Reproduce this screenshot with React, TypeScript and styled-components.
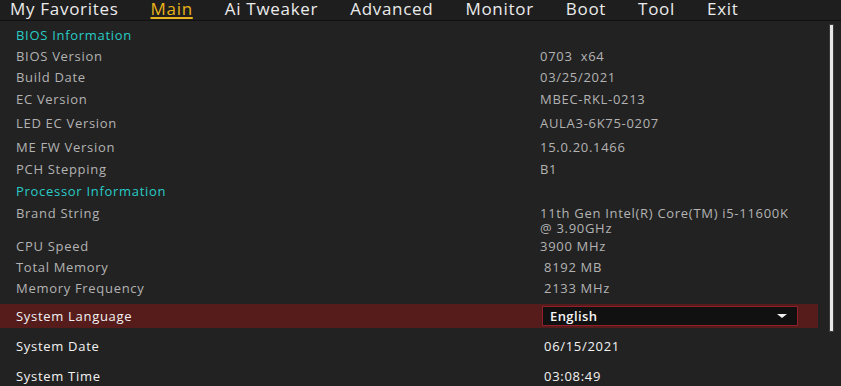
import React from 'react';
import styled, { createGlobalStyle } from 'styled-components';

const GlobalStyle = createGlobalStyle`
  html, body {
    margin: 0;
    padding: 0;
    background: #222222;
  }
  body {
    font-family: "Open Sans", "Noto Sans", "Liberation Sans", sans-serif;
    overflow: hidden;
  }
`;

const Screen = styled.div`
  width: 841px;
  height: 386px;
  background: #222222;
  overflow: hidden;
`;

const TabBar = styled.nav`
  display: flex;
  gap: 32px;
  height: 20px;
  padding-left: 10px;
  background: #1e1e1e;
  border-bottom: 1px solid #111111;
  align-items: flex-start;
`;

const Tab = styled.span<{ $active?: boolean }>`
  font-size: 17px;
  line-height: 20px;
  margin-top: -1px;
  letter-spacing: 0.7px;
  color: ${(p) => (p.$active ? '#e8b21c' : '#ebebeb')};
  text-decoration: ${(p) => (p.$active ? 'underline' : 'none')};
  text-decoration-thickness: 2px;
  text-underline-offset: 2px;
`;

const Body = styled.div`
  display: flex;
  padding-top: 3px;
`;

const List = styled.div`
  width: 818px;
  display: flex;
  flex-direction: column;
`;

const Row = styled.div<{ $h: number; $top?: boolean; $selected?: boolean; $gap?: number }>`
  display: flex;
  height: ${(p) => p.$h}px;
  margin-top: ${(p) => p.$gap ?? 0}px;
  align-items: ${(p) => (p.$top ? 'flex-start' : 'center')};
  padding-top: ${(p) => (p.$top ? 4 : 0)}px;
  box-sizing: border-box;
  background: ${(p) => (p.$selected ? '#561c1c' : 'transparent')};
  font-size: 13px;
  line-height: 15px;
  letter-spacing: 0.7px;
`;

const Section = styled.div`
  padding-left: 16px;
  color: #27ccc7;
`;

const Label = styled.div<{ $bright?: boolean }>`
  width: 524px;
  padding-left: 16px;
  color: ${(p) => (p.$bright ? '#f2f2f2' : '#b3b3b3')};
`;

const Value = styled.div<{ $indent?: number; $bright?: boolean }>`
  padding-left: ${(p) => p.$indent ?? 0}px;
  color: ${(p) => (p.$bright ? '#f2f2f2' : '#b3b3b3')};
`;

const Select = styled.div`
  margin-left: 2px;
  width: 256px;
  height: 20px;
  box-sizing: border-box;
  background: #111111;
  border: 1px solid #8e1f2b;
  display: flex;
  align-items: center;
  justify-content: space-between;
  padding: 0 10px 0 7px;
  color: #f4f4f4;
  font-weight: 600;
  letter-spacing: 0.4px;
`;

const Caret = styled.span`
  width: 0;
  height: 0;
  border-left: 5px solid transparent;
  border-right: 5px solid transparent;
  border-top: 4px solid #f0f0f0;
`;

const Track = styled.div`
  margin-left: 11px;
  width: 5px;
  height: 308px;
  box-sizing: border-box;
  background: #e6e6e6;
  border: 1px solid #3a3a3a;
  border-radius: 1px;
`;

type Item = {
  label?: string;
  section?: string;
  value?: React.ReactNode;
  h: number;
};

const info: Item[] = [
  { section: 'BIOS Information', h: 22 },
  { label: 'BIOS Version', value: '0703\u00a0\u00a0x64', h: 20 },
  { label: 'Build Date', value: '03/25/2021', h: 22 },
  { label: 'EC Version', value: 'MBEC-RKL-0213', h: 22 },
  { label: 'LED EC Version', value: 'AULA3-6K75-0207', h: 26 },
  { label: 'ME FW Version', value: '15.0.20.1466', h: 22 },
  { label: 'PCH Stepping', value: 'B1', h: 22 },
  { section: 'Processor Information', h: 22 },
];

const tabs = ['My Favorites', 'Main', 'Ai Tweaker', 'Advanced', 'Monitor', 'Boot', 'Tool', 'Exit'];

export default function App() {
  return (
    <Screen>
      <GlobalStyle />
      <TabBar>
        {tabs.map((t) => (
          <Tab key={t} $active={t === 'Main'}>
            {t}
          </Tab>
        ))}
      </TabBar>
      <Body>
        <List>
          {info.map((it, i) => (
            <Row key={i} $h={it.h}>
              {it.section ? (
                <Section>{it.section}</Section>
              ) : (
                <>
                  <Label>{it.label}</Label>
                  <Value>{it.value}</Value>
                </>
              )}
            </Row>
          ))}
          <Row $h={34} $top>
            <Label>Brand String</Label>
            <Value>
              11th Gen Intel(R) Core(TM) i5-11600K
              <br />@ 3.90GHz
            </Value>
          </Row>
          <Row $h={20}>
            <Label>CPU Speed</Label>
            <Value>3900 MHz</Value>
          </Row>
          <Row $h={22}>
            <Label>Total Memory</Label>
            <Value $indent={4}>8192 MB</Value>
          </Row>
          <Row $h={20}>
            <Label>Memory Frequency</Label>
            <Value $indent={4}>2133 MHz</Value>
          </Row>
          <Row $h={24} $gap={6} $selected>
            <Label $bright>System Language</Label>
            <Select>
              English
              <Caret />
            </Select>
          </Row>
          <Row $h={36}>
            <Label $bright>System Date</Label>
            <Value $indent={4} $bright>
              06/15/2021
            </Value>
          </Row>
          <Row $h={24}>
            <Label $bright>System Time</Label>
            <Value $indent={4} $bright>
              03:08:49
            </Value>
          </Row>
        </List>
        <Track />
      </Body>
    </Screen>
  );
}
